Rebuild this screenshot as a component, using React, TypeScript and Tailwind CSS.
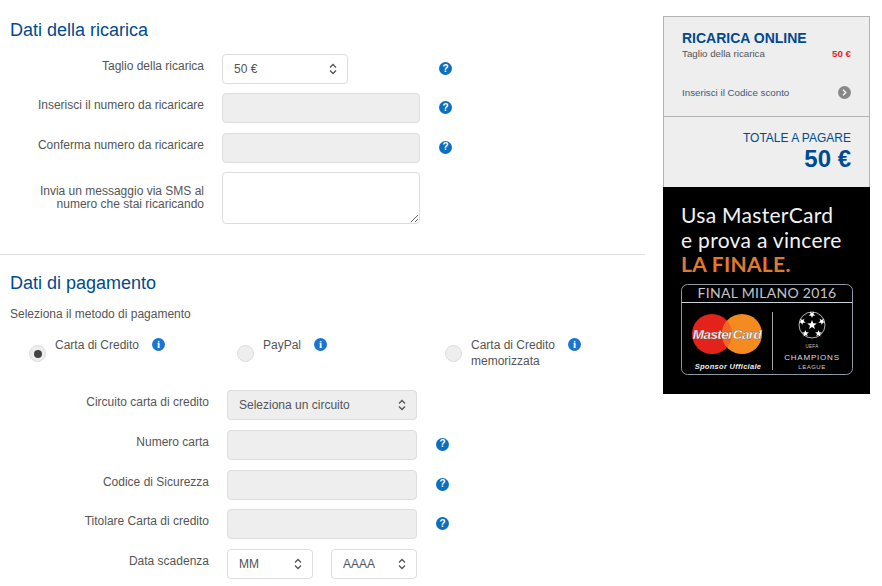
import type { ReactNode } from "react";

function HelpIcon() {
  return (
    <span className="flex h-[13px] w-[13px] items-center justify-center rounded-full bg-[#0b6fc0] text-[10px] leading-none font-bold text-white">
      ?
    </span>
  );
}

function InfoIcon() {
  return (
    <span className="flex h-[13px] w-[13px] items-center justify-center rounded-full bg-[#1c74cc] font-['Liberation_Serif',serif] text-[11px] leading-none font-bold text-white">
      i
    </span>
  );
}

function Chevrons() {
  return (
    <svg
      className="pointer-events-none absolute top-1/2 right-[11px] -translate-y-1/2"
      width="8"
      height="12"
      viewBox="0 0 8 12"
      fill="none"
      stroke="#555"
      strokeWidth="1.3"
    >
      <path d="M1 4.5 4 1.5 7 4.5" />
      <path d="M1 7.5 4 10.5 7 7.5" />
    </svg>
  );
}

function Select({
  label,
  className,
}: {
  label: string;
  className: string;
}) {
  return (
    <div className={`relative h-[30px] ${className}`}>
      <select className="h-full w-full appearance-none rounded border border-[#ddd] bg-transparent pr-6 pl-[11px] text-xs text-[#555]">
        <option>{label}</option>
      </select>
      <Chevrons />
    </div>
  );
}

function TextInput() {
  return (
    <input
      type="text"
      disabled
      className="h-[30px] w-full rounded border border-[#ddd] bg-[#eee]"
    />
  );
}

function Row({
  label,
  labelWidth,
  controlWidth,
  help,
  children,
}: {
  label: ReactNode;
  labelWidth: string;
  controlWidth: string;
  help?: boolean;
  children: ReactNode;
}) {
  return (
    <div className="flex">
      <label
        className={`${labelWidth} pt-[6px] text-right text-xs leading-[13px] text-[#555]`}
      >
        {label}
      </label>
      <div className={`ml-[18px] ${controlWidth}`}>{children}</div>
      {help && (
        <div className="ml-[19px] pt-[8px]">
          <HelpIcon />
        </div>
      )}
    </div>
  );
}

function PayMethod({
  lines,
  selected,
  infoLeft,
  className,
}: {
  lines: string[];
  selected?: boolean;
  infoLeft: string;
  className: string;
}) {
  return (
    <div className={`flex ${className}`}>
      <span className="flex h-[17px] w-[17px] shrink-0 items-center justify-center rounded-full border border-[#ddd] bg-[#eee]">
        {selected && <span className="h-[8px] w-[8px] rounded-full bg-[#444]" />}
      </span>
      <div className="ml-[9px] -mt-[8px] text-xs leading-[16px] text-[#555]">
        <div className="flex">
          <span>{lines[0]}</span>
          <span className={`${infoLeft} mt-[1px]`}>
            <InfoIcon />
          </span>
        </div>
        {lines[1] && <div>{lines[1]}</div>}
      </div>
    </div>
  );
}

function Ball() {
  const star = (cx: number, cy: number, r: number, rot: number) => {
    const pts: string[] = [];
    for (let i = 0; i < 10; i++) {
      const rad = i % 2 === 0 ? r : r * 0.42;
      const a = (Math.PI / 5) * i - Math.PI / 2 + rot;
      pts.push(`${cx + rad * Math.cos(a)},${cy + rad * Math.sin(a)}`);
    }
    return <polygon key={`${cx}-${cy}`} points={pts.join(" ")} fill="#fff" />;
  };
  return (
    <g>
      <circle cx="149" cy="48" r="13" fill="none" stroke="#ddd" strokeWidth="0.8" />
      {star(149, 48, 5, 0)}
      {star(149, 37.5, 3.6, 3.14)}
      {star(158.8, 44.5, 3.6, 0.6)}
      {star(155.5, 56.5, 3.6, 1.3)}
      {star(142.5, 56.5, 3.6, -1.3)}
      {star(139.2, 44.5, 3.6, -0.6)}
    </g>
  );
}

function Badge() {
  return (
    <svg width="207" height="105" viewBox="0 0 207 105" className="block">
      <defs>
        <clipPath id="redCircle">
          <circle cx="49" cy="57" r="20" />
        </clipPath>
      </defs>
      <rect x="18.5" y="7.5" width="171" height="90" rx="6" fill="none" stroke="#8a9aa6" strokeWidth="1" />
      <path d="M18.5 25.5h171" stroke="#c9d2d8" strokeWidth="1" />
      <text x="104" y="21" textAnchor="middle" fontFamily="Lato, sans-serif" fontSize="14" fill="#c8c3c8">
        FINAL MILANO 2016
      </text>
      <circle cx="49" cy="57" r="20" fill="#e3231b" />
      <circle cx="79" cy="57" r="20" fill="#f58a1f" />
      <g clipPath="url(#redCircle)">
        <circle cx="79" cy="57" r="20" fill="#f26522" />
      </g>
      <text
        x="64"
        y="61.5"
        textAnchor="middle"
        fontFamily="'Liberation Sans', sans-serif"
        fontSize="13.5"
        fontWeight="700"
        fontStyle="italic"
        letterSpacing="-0.6"
        fill="#fff"
        stroke="#555"
        strokeWidth="0.3"
      >
        MasterCard
      </text>
      <text x="65" y="92" textAnchor="middle" fontFamily="'Liberation Sans', sans-serif" fontSize="7.5" fontWeight="700" fontStyle="italic" fill="#eee">
        Sponsor Ufficiale
      </text>
      <path d="M109.5 35v58" stroke="#ccc" strokeWidth="0.8" />
      <Ball />
      <text x="149" y="71" textAnchor="middle" fontFamily="'Liberation Sans', sans-serif" fontSize="4.5" fill="#ccc">
        UEFA
      </text>
      <text x="149" y="83" textAnchor="middle" fontFamily="'Liberation Sans', sans-serif" fontSize="8" letterSpacing="0.8" fill="#ddd">
        CHAMPIONS
      </text>
      <text x="149" y="92" textAnchor="middle" fontFamily="'Liberation Sans', sans-serif" fontSize="6" letterSpacing="0.5" fill="#ccc">
        LEAGUE
      </text>
    </svg>
  );
}

export default function App() {
  return (
    <div className="flex h-[586px] w-[882px] overflow-hidden bg-white font-['Liberation_Sans',Arial,sans-serif]">
      <main className="w-[645px] shrink-0">
        <section className="border-b border-[#ddd] pb-[30px]">
          <h2 className="pt-[20px] pl-[10px] text-lg leading-[21px] text-[#004a8f]">
            Dati della ricarica
          </h2>
          <div className="mt-[13px] flex flex-col gap-[9.4px]">
            <Row label="Taglio della ricarica" labelWidth="w-[204px]" controlWidth="w-[198px]" help>
              <Select label="50 €" className="w-[126px]" />
            </Row>
            <Row label="Inserisci il numero da ricaricare" labelWidth="w-[204px]" controlWidth="w-[198px]" help>
              <TextInput />
            </Row>
            <Row label="Conferma numero da ricaricare" labelWidth="w-[204px]" controlWidth="w-[198px]" help>
              <TextInput />
            </Row>
            <div className="flex">
              <label className="w-[204px] pt-[13px] text-right text-xs leading-[13px] text-[#555]">
                Invia un messaggio via SMS al
                <br />
                numero che stai ricaricando
              </label>
              <textarea className="ml-[18px] h-[52px] w-[198px] rounded border border-[#ddd]" />
            </div>
          </div>
        </section>

        <section>
          <h2 className="pt-[18px] pl-[10px] text-lg leading-[21px] text-[#004a8f]">
            Dati di pagamento
          </h2>
          <p className="mt-[13px] pl-[10px] text-xs leading-[14px] text-[#555]">
            Seleziona il metodo di pagamento
          </p>
          <div className="mt-[24px] flex h-[45px] pl-[29px]">
            <PayMethod lines={["Carta di Credito"]} selected infoLeft="ml-[13px]" className="w-[208px]" />
            <PayMethod lines={["PayPal"]} infoLeft="ml-[13px]" className="w-[208px]" />
            <PayMethod lines={["Carta di Credito", "memorizzata"]} infoLeft="ml-[13px]" className="w-[160px]" />
          </div>
          <div className="flex flex-col gap-[9.75px]">
            <Row label="Circuito carta di credito" labelWidth="w-[209px]" controlWidth="w-[190px]">
              <div className="rounded bg-[#eee]">
                <Select label="Seleziona un circuito" className="w-full" />
              </div>
            </Row>
            <Row label="Numero carta" labelWidth="w-[209px]" controlWidth="w-[190px]" help>
              <TextInput />
            </Row>
            <Row label="Codice di Sicurezza" labelWidth="w-[209px]" controlWidth="w-[190px]" help>
              <TextInput />
            </Row>
            <Row label="Titolare Carta di credito" labelWidth="w-[209px]" controlWidth="w-[190px]" help>
              <TextInput />
            </Row>
            <Row label="Data scadenza" labelWidth="w-[209px]" controlWidth="w-[190px]">
              <div className="flex justify-between">
                <Select label="MM" className="w-[86px]" />
                <Select label="AAAA" className="w-[86px]" />
              </div>
            </Row>
          </div>
        </section>
      </main>

      <aside className="mt-4 ml-[18px] w-[207px] shrink-0">
        <div className="border border-b-0 border-[#b3b3b3] bg-[#eee]">
          <div className="h-[100px] border-b border-[#b3b3b3] px-[18px] pt-[13px]">
            <h3 className="text-sm leading-[16px] font-bold text-[#004a8f]">RICARICA ONLINE</h3>
            <div className="mt-[2px] flex justify-between text-[9.75px] leading-[12px]">
              <span className="text-[#555]">Taglio della ricarica</span>
              <span className="font-bold text-[#e3242b]">50 €</span>
            </div>
            <div className="mt-[26px] flex items-center justify-between text-[9.75px] leading-[13px] text-[#3a5a80]">
              <span>Inserisci il Codice sconto</span>
              <span className="flex h-[13px] w-[13px] items-center justify-center rounded-full bg-[#888]">
                <svg width="5" height="7" viewBox="0 0 5 7" fill="none" stroke="#fff" strokeWidth="1.2">
                  <path d="M1 .8 3.8 3.5 1 6.2" />
                </svg>
              </span>
            </div>
          </div>
          <div className="h-[70px] px-[18px] pt-[14px] text-right text-[#004a8f]">
            <div className="text-xs leading-[14px]">TOTALE A PAGARE</div>
            <div className="text-2xl leading-[27px] font-bold">50 €</div>
          </div>
        </div>
        <div className="h-[207px] bg-black font-['Lato',sans-serif] text-[21px] leading-[24.5px] tracking-[0.3px] text-[#f2f2f2]">
          <div className="pt-[16px] pl-[18px]">
            <div>Usa MasterCard</div>
            <div>e prova a vincere</div>
            <div className="font-bold text-[#e07b2e]">LA FINALE.</div>
          </div>
          <Badge />
        </div>
      </aside>
    </div>
  );
}
